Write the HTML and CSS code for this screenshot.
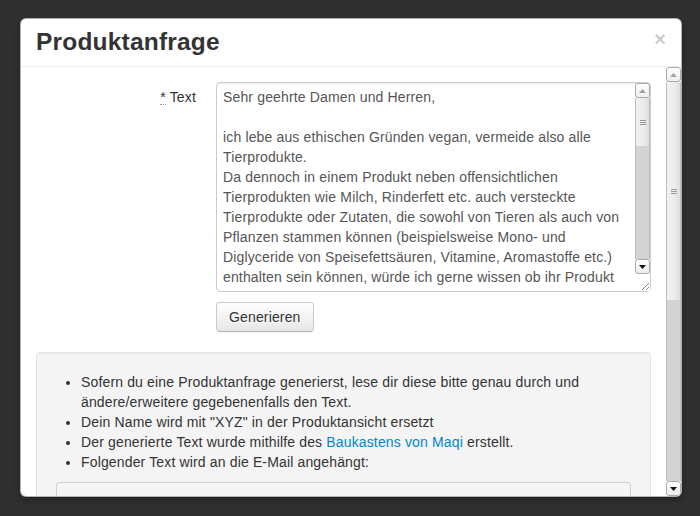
FILE: index.html
```html
<!DOCTYPE html>
<html lang="de">
<head>
<meta charset="utf-8">
<title>Produktanfrage</title>
<link rel="stylesheet" href="styles.css">
</head>
<body>
<div class="page">
  <div class="modal">
    <div class="modal-header">
      <button class="close" type="button">×</button>
      <h3>Produktanfrage</h3>
    </div>
    <div class="modal-frame">
      <div class="modal-body">
        <form class="form-horizontal">
          <div class="control-group">
            <label class="control-label"><abbr title="Pflichtfeld">*</abbr> Text</label>
            <div class="controls">
              <div class="textarea">
                <div class="textarea-text">
                  <div>Sehr geehrte Damen und Herren,</div>
                  <div>&nbsp;</div>
                  <div>ich lebe aus ethischen Gründen vegan, vermeide also alle</div>
                  <div>Tierprodukte.</div>
                  <div>Da dennoch in einem Produkt neben offensichtlichen</div>
                  <div>Tierprodukten wie Milch, Rinderfett etc. auch versteckte</div>
                  <div>Tierprodukte oder Zutaten, die sowohl von Tieren als auch von</div>
                  <div>Pflanzen stammen können (beispielsweise Mono- und</div>
                  <div>Diglyceride von Speisefettsäuren, Vitamine, Aromastoffe etc.)</div>
                  <div>enthalten sein können, würde ich gerne wissen ob ihr Produkt</div>
                </div>
                <div class="sb sb-inner">
                  <div class="sb-btn"><svg width="7" height="4" viewBox="0 0 7 4"><polygon points="0,4 7,4 3.5,0" fill="#a3a3a3"/></svg></div>
                  <div class="sb-thumb"><svg width="6" height="5" viewBox="0 0 6 5"><path d="M0 0.5H6M0 2.5H6M0 4.5H6" stroke="#9a9a9a" stroke-width="1"/></svg></div>
                  <div class="sb-track"></div>
                  <div class="sb-btn"><svg width="7" height="4" viewBox="0 0 7 4"><polygon points="0,0 7,0 3.5,4" fill="#111"/></svg></div>
                  <div class="sb-corner"><svg width="8" height="8" viewBox="0 0 8 8"><path d="M1 8L8 1M5 8L8 5" stroke="#8a8a8a" stroke-width="1"/></svg></div>
                </div>
              </div>
            </div>
          </div>
          <div class="control-group actions">
            <button class="btn" type="button">Generieren</button>
          </div>
        </form>
        <div class="well">
          <ul>
            <li>Sofern du eine Produktanfrage generierst, lese dir diese bitte genau durch und ändere/erweitere gegebenenfalls den Text.</li>
            <li>Dein Name wird mit "XYZ" in der Produktansicht ersetzt</li>
            <li>Der generierte Text wurde mithilfe des <a href="#">Baukastens von Maqi</a> erstellt.</li>
            <li>Folgender Text wird an die E-Mail angehängt:</li>
          </ul>
          <pre class="appendix"></pre>
        </div>
      </div>
      <div class="sb sb-outer">
        <div class="sb-btn"><svg width="7" height="4" viewBox="0 0 7 4"><polygon points="0,4 7,4 3.5,0" fill="#a3a3a3"/></svg></div>
        <div class="sb-thumb"><svg width="6" height="5" viewBox="0 0 6 5"><path d="M0 0.5H6M0 2.5H6M0 4.5H6" stroke="#9a9a9a" stroke-width="1"/></svg></div>
        <div class="sb-track"></div>
        <div class="sb-btn"><svg width="7" height="4" viewBox="0 0 7 4"><polygon points="0,0 7,0 3.5,4" fill="#111"/></svg></div>
      </div>
    </div>
  </div>
</div>
</body>
</html>
```
FILE: styles.css
```css
html, body {
  margin: 0;
  height: 100%;
}
body {
  background: #303030;
  font-family: "Liberation Sans", Arial, sans-serif;
  font-size: 14px;
  line-height: 20px;
  letter-spacing: 0.15px;
  color: #333;
  overflow: hidden;
}
.page {
  padding: 18px 0 0 20px;
}
.modal {
  width: 660px;
  background: #fff;
  border: 1px solid rgba(0, 0, 0, 0.3);
  border-radius: 6px;
  box-shadow: 0 3px 7px rgba(0, 0, 0, 0.3);
  overflow: hidden;
}
.modal-header {
  padding: 8px 15px 9px;
  border-bottom: 1px solid #eee;
}
.modal-header h3 {
  margin: 0;
  font-size: 24.5px;
  line-height: 30px;
  font-weight: bold;
  letter-spacing: 0.2px;
  color: #333;
}
.close {
  float: right;
  margin-top: 2px;
  padding: 0;
  border: 0;
  background: none;
  font-family: "Liberation Sans", Arial, sans-serif;
  font-size: 20px;
  font-weight: bold;
  line-height: 20px;
  color: #000;
  opacity: 0.2;
}
.modal-frame {
  display: flex;
  height: 429px;
}
.modal-body {
  flex: 1;
  padding: 15px;
  overflow: hidden;
}
.form-horizontal {
  margin: 0;
}
.control-group {
  display: flex;
  margin-bottom: 10px;
}
.control-group.actions {
  padding-left: 180px;
  margin-bottom: 20px;
}
.control-label {
  width: 160px;
  margin-right: 20px;
  padding-top: 5px;
  text-align: right;
}
.control-label abbr {
  text-decoration: none;
  border-bottom: 1px dotted #999;
  line-height: 14px;
  display: inline-block;
}
.controls {
  flex: 1;
}
.textarea {
  display: flex;
  height: 210px;
  box-sizing: border-box;
  border: 1px solid #ccc;
  border-radius: 4px;
  box-shadow: inset 0 1px 1px rgba(0, 0, 0, 0.075);
  background: #fff;
}
.textarea-text {
  flex: 1;
  padding: 4px 6px;
  color: #555;
  white-space: nowrap;
  overflow: hidden;
}
.sb {
  width: 15px;
  flex: none;
  display: flex;
  flex-direction: column;
}
.sb-btn {
  height: 15px;
  flex: none;
  box-sizing: border-box;
  border: 1px solid #a9a9a9;
  border-radius: 3px;
  background: linear-gradient(#fefefe, #ededed);
  display: flex;
  align-items: center;
  justify-content: center;
}
.sb-btn svg {
  display: block;
}
.sb-thumb {
  flex: none;
  box-sizing: border-box;
  border-left: 1px solid #bdbdbd;
  border-right: 1px solid #bdbdbd;
  background: linear-gradient(to right, #f2f2f2 0%, #ececec 60%, #dedede 100%);
  display: flex;
  align-items: center;
  justify-content: center;
}
.sb-thumb svg {
  display: block;
}
.sb-track {
  flex: 1;
  box-sizing: border-box;
  border-left: 1px solid #bdbdbd;
  border-right: 1px solid #bdbdbd;
  background: #d3d3d3;
}
.sb-inner .sb-thumb {
  height: 48px;
}
.sb-corner {
  height: 16px;
  flex: none;
  background: #fff;
  display: flex;
  align-items: flex-end;
  justify-content: flex-end;
  padding: 0 1px 1px 0;
}
.sb-corner svg {
  display: block;
}
.sb-outer .sb-thumb {
  height: 218px;
}
.btn {
  display: inline-block;
  padding: 4px 12px;
  font-family: "Liberation Sans", Arial, sans-serif;
  font-size: 14px;
  line-height: 20px;
  letter-spacing: 0.15px;
  color: #333;
  text-shadow: 0 1px 1px rgba(255, 255, 255, 0.75);
  background: linear-gradient(#ffffff, #e6e6e6);
  border: 1px solid #ccc;
  border-bottom-color: #b3b3b3;
  border-radius: 4px;
  box-shadow: inset 0 1px 0 rgba(255, 255, 255, 0.2), 0 1px 2px rgba(0, 0, 0, 0.05);
}
.well {
  padding: 19px;
  background: #f4f4f4;
  border: 1px solid #e3e3e3;
  border-radius: 4px;
  box-shadow: inset 0 1px 1px rgba(0, 0, 0, 0.05);
}
.well ul {
  margin: 0 0 10px 25px;
  padding: 0;
}
.well a {
  color: #0088cc;
  text-decoration: none;
}
.well pre.appendix {
  margin: 0;
  height: 60px;
  box-sizing: border-box;
  padding: 9.5px;
  background: #f5f5f5;
  border: 1px solid rgba(0, 0, 0, 0.15);
  border-radius: 4px;
}
```
